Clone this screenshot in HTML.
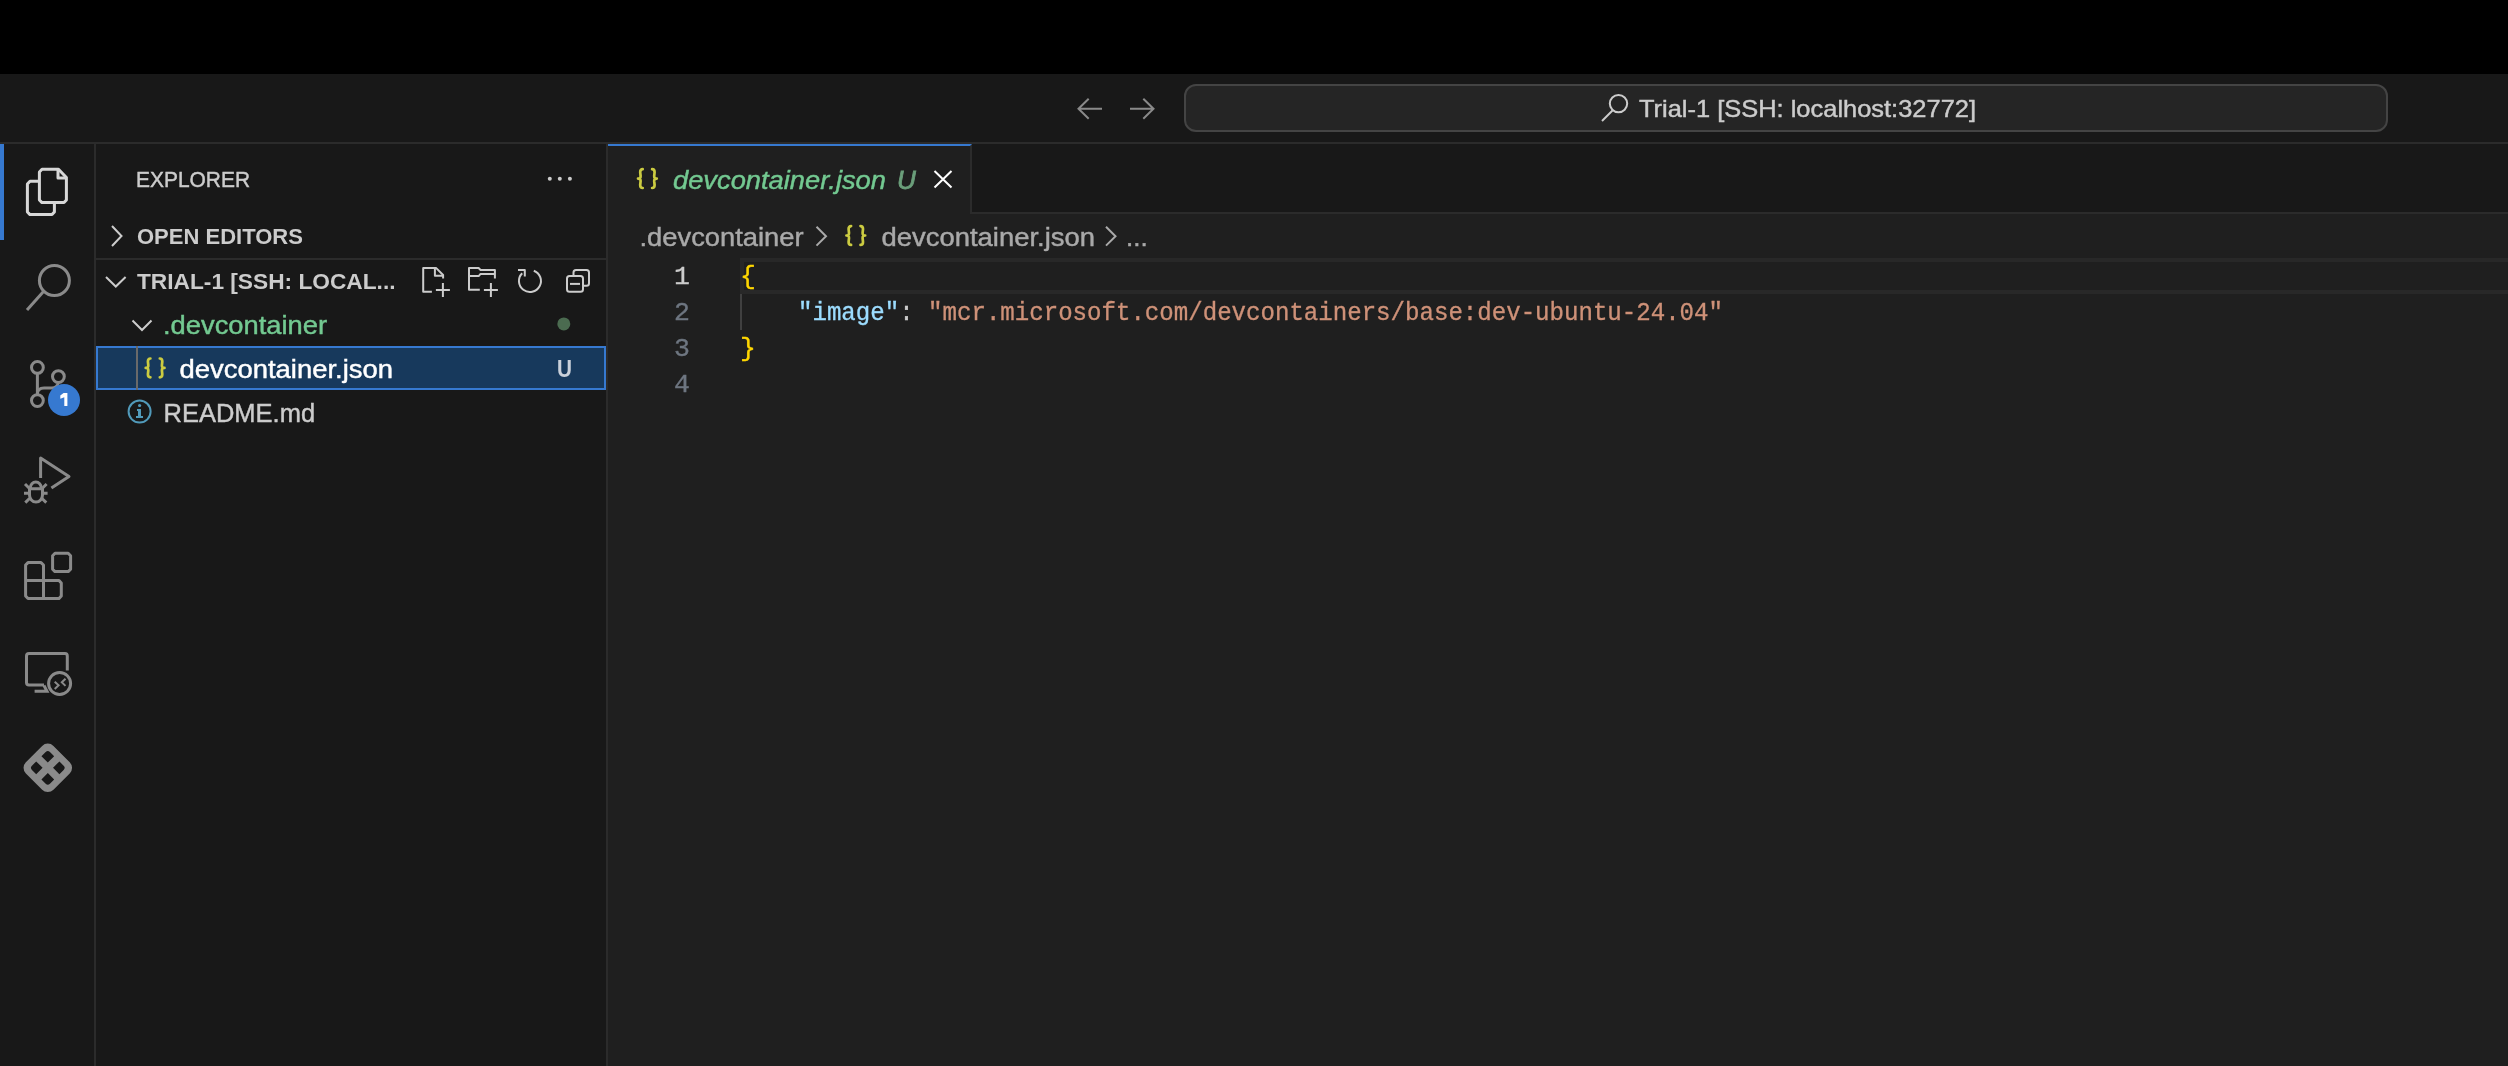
<!DOCTYPE html>
<html><head><meta charset="utf-8">
<style>
*{margin:0;padding:0;box-sizing:border-box}
html,body{width:2508px;height:1066px;overflow:hidden;background:#000;font-family:"Liberation Sans",sans-serif}
.a{position:absolute}
#top{left:0;top:0;width:2508px;height:74px;background:#000}
#title{left:0;top:74px;width:2508px;height:70px;background:#181818;border-bottom:2px solid #2b2b2b}
#act{left:0;top:144px;width:96px;height:922px;background:#181818;border-right:2px solid #2b2b2b}
#actind{left:0;top:144px;width:4px;height:96px;background:#3679d0}
#side{left:96px;top:144px;width:512px;height:922px;background:#181818;border-right:2px solid #2b2b2b}
#sechdr{left:96px;top:258px;width:510px;height:2px;background:#2b2b2b}
#sel{left:96px;top:346px;width:510px;height:44px;background:#17395c;border:2px solid #3679d0}
#guide{left:136px;top:346px;width:2px;height:44px;background:#6a6a6a}
#tabs{left:608px;top:144px;width:1900px;height:70px;background:#181818;border-bottom:2px solid #2b2b2b}
#editor{left:608px;top:214px;width:1900px;height:852px;background:#1f1f1f}
#tab{left:608px;top:144px;width:364px;height:70px;background:#1f1f1f;border-right:2px solid #2b2b2b;border-top:2px solid #3679d0}
#curline{left:740px;top:258px;width:1768px;height:36px;border:4px solid #282828;border-right:none}
#iguide{left:740px;top:294px;width:2px;height:36px;background:#404040}
#cc{left:1184px;top:84px;width:1204px;height:48px;background:#252525;border:2px solid #444444;border-radius:12px}
svg{position:absolute;left:0;top:0;will-change:transform}
text{font-family:"Liberation Sans",sans-serif}
.mono{font-family:"Liberation Mono",monospace}
</style></head><body>
<div class="a" id="top"></div>
<div class="a" id="title"></div>
<div class="a" id="act"></div>
<div class="a" id="actind"></div>
<div class="a" id="side"></div>
<div class="a" id="sechdr"></div>
<div class="a" id="sel"></div>
<div class="a" id="guide"></div>
<div class="a" id="tabs"></div>
<div class="a" id="editor"></div>
<div class="a" id="tab"></div>
<div class="a" id="curline"></div>
<div class="a" id="iguide"></div>
<div class="a" id="cc"></div>
<svg width="2508" height="1066" viewBox="0 0 2508 1066">
<defs><path id="jsonic" fill="none" stroke="#cbcb41" stroke-width="2.7" stroke-linecap="round" stroke-linejoin="round" d="M5.8 1.5 Q3.3 1.5 3.3 4.5 L3.7 8.3 Q3.9 10.9 1.1 10.9 Q3.9 10.9 3.7 13.5 L3.3 17.3 Q3.3 20.3 5.8 20.3 M15.2 1.5 Q17.7 1.5 17.7 4.5 L17.3 8.3 Q17.1 10.9 19.9 10.9 Q17.1 10.9 17.3 13.5 L17.7 17.3 Q17.7 20.3 15.2 20.3"/></defs>
<!-- title bar -->
<g fill="none" stroke="#8a8a8a" stroke-width="2">
 <path d="M1078.5 108.7 H1102 M1088.7 98.7 L1078.5 108.7 L1088.7 118.7"/>
 <path d="M1130 108.7 H1153.5 M1143.3 98.7 L1153.5 108.7 L1143.3 118.7"/>
</g>
<g fill="none" stroke="#cccccc" stroke-width="2">
 <circle cx="1618.5" cy="103.6" r="8.7"/>
 <path d="M1612.5 110.5 L1602 121"/>
</g>
<text x="1639" y="117" font-size="24" fill="#cccccc" textLength="337" lengthAdjust="spacingAndGlyphs" stroke="#cccccc" stroke-width="0.45">Trial-1 [SSH: localhost:32772]</text>

<!-- activity bar icons -->
<g fill="none" stroke="#d7d7d7" stroke-width="3" stroke-linejoin="round">
 <path d="M42 169.3 H58.5 L66.4 177.5 V200 L64 202.6 H42 L39.4 200 V172 Z"/>
 <path d="M58 169.3 V178 H66.4"/>
 <path d="M39.4 181.3 H30 L27.4 184 V212 L30 214.6 H52 L54.4 212 V202.6"/>
</g>
<g fill="none" stroke="#8a8a8a" stroke-width="3">
 <circle cx="54.4" cy="280.5" r="15"/>
 <path d="M43.5 291.5 L27 310"/>
</g>
<g fill="none" stroke="#8a8a8a" stroke-width="3">
 <circle cx="37.4" cy="367.4" r="5.9"/>
 <circle cx="37.4" cy="400.6" r="5.9"/>
 <circle cx="58.4" cy="376.6" r="5.9"/>
 <path d="M37.4 373.3 V394.7"/>
 <path d="M37.4 394 Q37.4 388 44 388 H52 Q57 388 58.4 382.5"/>
</g>
<circle cx="64" cy="400" r="16" fill="#3679d0"/>
<path fill="#ffffff" d="M63.6 393 H67.4 V406 H64.3 V397.3 L60.3 398.8 V395.6 Z"/>
<g fill="none" stroke="#8a8a8a" stroke-width="3">
 <path d="M40.6 478 V458 L69 476.5 L51.4 488" stroke-linejoin="round"/>
 <path d="M30.3 488 A5.5 6 0 0 1 41.3 488"/>
 <path d="M29.5 488.8 H42.5 V495 A6.5 7 0 0 1 29.5 495 Z"/>
 <path d="M25 484 L29 488 M46.6 484 L42.6 488 M24 493.3 H28.5 M47.6 493.3 H43 M25.3 502.6 L29.5 498.5 M46.3 502.6 L42 498.5"/>
</g>
<g fill="none" stroke="#8a8a8a" stroke-width="3" stroke-linejoin="round">
 <path d="M25.6 565 L28 562.6 H41 L43.5 565 V580.5 H59 L61.3 583 V596 L59 598.6 H28 L25.6 596 Z"/>
 <path d="M25.6 580.5 H43.5 V598.6"/>
 <path d="M55 553.3 H68.2 L70.6 555.7 V569.2 L68.2 571.6 H55 L52.6 569.2 V555.7 Z"/>
</g>
<g fill="none" stroke="#8a8a8a" stroke-width="3">
 <path d="M67.3 670.6 V656 Q67.3 653.5 65 653.5 H29 Q26.5 653.5 26.5 656 V682.5 Q26.5 685 29 685 H44"/>
 <path d="M34.6 691.3 H47 L44 685.5"/>
 <circle cx="59.6" cy="683.5" r="11"/>
</g>
<g fill="none" stroke="#8a8a8a" stroke-width="2">
 <path d="M54.7 681.7 L58.6 685.3 L54.7 688.9 M65.5 678.7 L61.8 682.3 L65.5 685.9"/>
</g>
<g transform="translate(47.8 767.8) rotate(45)">
 <path fill="#8a8a8a" fill-rule="evenodd" d="M-11.5 -19.5 H11.5 A8 8 0 0 1 19.5 -11.5 V11.5 A8 8 0 0 1 11.5 19.5 H-11.5 A8 8 0 0 1 -19.5 11.5 V-11.5 A8 8 0 0 1 -11.5 -19.5 Z
  M-3.7 -3.7 H-12.7 V-9.7 A3 3 0 0 1 -9.7 -12.7 H-3.7 Z M3.7 -3.7 H12.7 V-9.7 A3 3 0 0 0 9.7 -12.7 H3.7 Z M-3.7 3.7 H-12.7 V9.7 A3 3 0 0 0 -9.7 12.7 H-3.7 Z M3.7 3.7 H12.7 V9.7 A3 3 0 0 1 9.7 12.7 H3.7 Z"/>
</g>

<!-- sidebar -->
<text x="136" y="187" font-size="22" fill="#cccccc" textLength="114" lengthAdjust="spacingAndGlyphs" stroke="#cccccc" stroke-width="0.45">EXPLORER</text>
<g fill="#cccccc"><circle cx="549.8" cy="178.8" r="2"/><circle cx="559.8" cy="178.8" r="2"/><circle cx="569.9" cy="178.8" r="2"/></g>
<g fill="none" stroke="#cccccc" stroke-width="2">
 <path d="M112 226 L121.5 236 L112 246"/>
 <path d="M106 277 L115.8 286.5 L125.6 277"/>
 <path d="M132.5 320.5 L142 330 L151.5 320.5"/>
</g>
<text x="137" y="244" font-size="22" font-weight="bold" fill="#cccccc">OPEN EDITORS</text>
<text x="137" y="289" font-size="22" font-weight="bold" fill="#cccccc" textLength="258.5" lengthAdjust="spacingAndGlyphs">TRIAL-1 [SSH: LOCAL...</text>
<g fill="none" stroke="#cccccc" stroke-width="2" stroke-linejoin="round">
 <path d="M431.9 291.8 H423.2 V267.9 H436 L443.1 275 V278.5"/>
 <path d="M434.9 268 V275.7 H443"/>
 <path d="M435.9 289.9 H449.9 M442.9 282.9 V296.9"/>
 <path d="M479.8 289.8 H469 V268 H478.6 L480.6 270 H494.9 V278.5"/>
 <path d="M469 275.9 H478.9 L480.6 273.9 H494.9"/>
 <path d="M483.9 289.9 H497.9 M490.9 282.9 V296.9"/>
 <path d="M533.8 270.7 A11 11 0 1 1 522.2 273.2"/>
 <path d="M518 269.9 H524.8 V276.5"/>
 <path d="M573.5 275.9 V272.4 Q573.5 269.9 576 269.9 H586.5 Q589 269.9 589 272.4 V283.2 Q589 285.7 586.5 285.7 H583"/>
 <path d="M569.5 275.9 H580.5 Q583 275.9 583 278.4 V289.3 Q583 291.8 580.5 291.8 H569.5 Q567 291.8 567 289.3 V278.4 Q567 275.9 569.5 275.9 Z"/>
 <path d="M570 283.9 H580"/>
</g>
<text x="163" y="334" font-size="26" fill="#73c991" textLength="164" lengthAdjust="spacingAndGlyphs" stroke="#73c991" stroke-width="0.45">.devcontainer</text>
<circle cx="563.8" cy="323.9" r="6.5" fill="#4b6b50"/>
<use href="#jsonic" transform="translate(144.6 357)"/>
<text x="179.5" y="378" font-size="26" fill="#ffffff" textLength="213.5" lengthAdjust="spacingAndGlyphs" stroke="#ffffff" stroke-width="0.45">devcontainer.json</text>
<text x="557" y="377.3" font-size="24" font-weight="bold" fill="#c9d0da" textLength="15" lengthAdjust="spacingAndGlyphs">U</text>
<g fill="none" stroke="#519aba" stroke-width="2">
 <circle cx="139.6" cy="411.6" r="11"/>
</g>
<g fill="#519aba"><circle cx="139.6" cy="405.5" r="1.6"/><path d="M137 409 H141 V416 H143 V418 H136 V416 H138 V411 H137 Z"/></g>
<text x="163.5" y="422" font-size="26" fill="#cccccc" textLength="151.6" lengthAdjust="spacingAndGlyphs" stroke="#cccccc" stroke-width="0.45">README.md</text>

<!-- tab -->
<use href="#jsonic" transform="translate(636.9 167.7)"/>
<text x="673" y="188.8" font-size="26" font-style="italic" fill="#73c991" textLength="213" lengthAdjust="spacingAndGlyphs" stroke="#73c991" stroke-width="0.45">devcontainer.json</text>
<text x="897" y="188.8" font-size="26" font-style="italic" fill="#6b9f7b" stroke="#6b9f7b" stroke-width="0.8">U</text>
<g fill="none" stroke="#ffffff" stroke-width="2"><path d="M934.5 171 L951.5 187.5 M951.5 171 L934.5 187.5"/></g>

<!-- breadcrumbs -->
<text x="639.5" y="245.5" font-size="26" fill="#a9a9a9" textLength="164" lengthAdjust="spacingAndGlyphs" stroke="#a9a9a9" stroke-width="0.45">.devcontainer</text>
<g fill="none" stroke="#a9a9a9" stroke-width="2"><path d="M816.5 226.8 L826 236.2 L816.5 245.6"/><path d="M1106 226.8 L1115.5 236.2 L1106 245.6"/></g>
<use href="#jsonic" transform="translate(845.3 224.6)"/>
<text x="881.5" y="246" font-size="26" fill="#a9a9a9" textLength="213.5" lengthAdjust="spacingAndGlyphs" stroke="#a9a9a9" stroke-width="0.45">devcontainer.json</text>
<text x="1126" y="246" font-size="26" fill="#a9a9a9" stroke="#a9a9a9" stroke-width="0.45">...</text>

<!-- code -->
<g font-size="26.5" class="mono" stroke-width="0.35">
 <text x="674" y="284" fill="#cccccc" stroke="#cccccc" class="mono">1</text>
 <text x="674" y="320" fill="#6e7681" stroke="#6e7681" class="mono">2</text>
 <text x="674" y="356" fill="#6e7681" stroke="#6e7681" class="mono">3</text>
 <text x="674" y="392" fill="#6e7681" stroke="#6e7681" class="mono">4</text>
 <text x="740" y="284" fill="#ffd700" stroke="#ffd700" class="mono">{</text>
 <text x="798" y="320" class="mono" textLength="925" lengthAdjust="spacingAndGlyphs"><tspan fill="#9cdcfe" stroke="#9cdcfe">"image"</tspan><tspan fill="#cccccc" stroke="#cccccc">: </tspan><tspan fill="#ce9178" stroke="#ce9178">"mcr.microsoft.com/devcontainers/base:dev-ubuntu-24.04"</tspan></text>
 <text x="740" y="356" fill="#ffd700" stroke="#ffd700" class="mono">}</text>
</g>
</svg>
</body></html>
